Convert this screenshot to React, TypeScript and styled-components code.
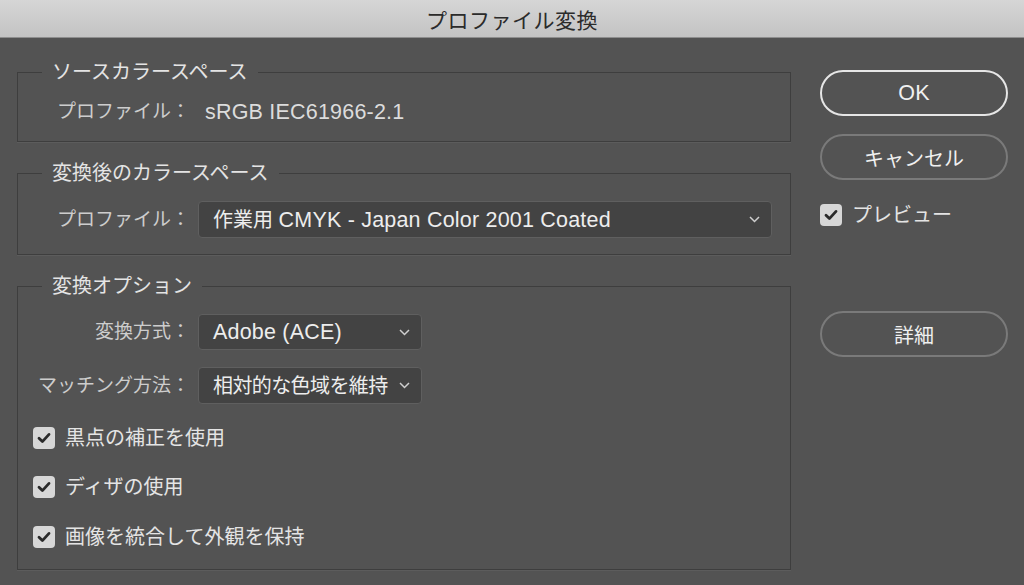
import React from 'react'
import styled, { createGlobalStyle } from 'styled-components'

const GlobalStyle = createGlobalStyle`
  html, body {
    margin: 0;
    padding: 0;
    background: #535353;
  }
  body {
    font-family: "Liberation Sans", "Noto Sans CJK JP", sans-serif;
    -webkit-font-smoothing: antialiased;
  }
`

const Window = styled.div`
  width: 1024px;
  height: 585px;
  background: #535353;
  overflow: hidden;
`

const TitleBar = styled.div`
  height: 37px;
  border-bottom: 1px solid #8e8e8e;
  background: linear-gradient(#d6d6d6, #c3c3c3);
  display: flex;
  align-items: center;
  justify-content: center;
  color: #2b2b2b;
  font-size: 21px;
  letter-spacing: 0.5px;
`

// latin runs render a bit larger than the kana in the original
const Lat = styled.span`
  font-size: 21.5px;
  letter-spacing: 0.2px;
`

const Tight = styled.span`
  letter-spacing: -0.6px;
`

const Main = styled.div`
  display: flex;
  align-items: flex-start;
  padding: 22px 16px 0 17px;
`

const LeftColumn = styled.div`
  width: 774px;
  display: flex;
  flex-direction: column;
  gap: 19px;
`

const Group = styled.fieldset<{ $bottom?: number }>`
  margin: 0;
  padding: 16px 0 ${(p) => p.$bottom ?? 16}px;
  border: 1px solid #3e3e3e;
  box-shadow: 0 1px 0 #5c5c5c;
  min-width: 0;
`

const Legend = styled.legend`
  margin-left: 24px;
  padding: 0 10px;
  font-size: 20px;
  line-height: 24px;
  color: #e4e4e4;
`

const FieldRow = styled.div<{ $gap?: number }>`
  display: grid;
  grid-template-columns: 172px 1fr;
  column-gap: 8px;
  align-items: center;
  line-height: 24px;
  margin-top: ${(p) => p.$gap ?? 0}px;
`

const Label = styled.span`
  text-align: right;
  font-size: 19px;
  color: #cdcdcd;
  white-space: nowrap;
`

const Value = styled.span`
  padding-left: 7px;
  font-size: 20px;
  color: #dcdcdc;
`

const Select = styled.div<{ $width: number; $height?: number }>`
  width: ${(p) => p.$width}px;
  height: ${(p) => p.$height ?? 36}px;
  box-sizing: border-box;
  display: flex;
  align-items: center;
  justify-content: space-between;
  gap: 6px;
  padding: 0 11px 0 14px;
  background: #434343;
  border: 1px solid #5f5f5f;
  border-radius: 4px;
  font-size: 20px;
  color: #ededed;
  white-space: nowrap;
`

const Chevron = () => (
  <svg width="11" height="7" viewBox="0 0 11 7" style={{ flexShrink: 0 }}>
    <path d="M1 1l4.5 4.5L10 1" fill="none" stroke="#cfcfcf" strokeWidth="1.5" />
  </svg>
)

const CheckRow = styled.label<{ $gap?: number; $indent?: number }>`
  display: flex;
  align-items: center;
  gap: 10px;
  margin-left: ${(p) => p.$indent ?? 15}px;
  margin-top: ${(p) => p.$gap ?? 0}px;
  font-size: 20px;
  line-height: 24px;
  color: #e4e4e4;
`

const Box = styled.span`
  width: 22px;
  height: 22px;
  border-radius: 4px;
  background: #d7d7d7;
  display: flex;
  align-items: center;
  justify-content: center;
  flex-shrink: 0;
`

const Check = () => (
  <Box>
    <svg width="14" height="12" viewBox="0 0 14 12">
      <path d="M2 6.2l3.4 3.4L12 2.4" fill="none" stroke="#2a2a2a" strokeWidth="2.8" strokeLinecap="round" strokeLinejoin="round" />
    </svg>
  </Box>
)

const RightColumn = styled.div`
  margin-left: 29px;
  margin-top: 10px;
  width: 188px;
  display: flex;
  flex-direction: column;
`

const PillButton = styled.button<{ $primary?: boolean; $gap?: number }>`
  height: 46px;
  width: 188px;
  margin-top: ${(p) => p.$gap ?? 0}px;
  border-radius: 23px;
  background: transparent;
  border: 2px solid ${(p) => (p.$primary ? '#e6e6e6' : '#7a7a7a')};
  color: #f0f0f0;
  font-family: inherit;
  font-size: 20px;
  padding: 0;
`

export default function App() {
  return (
    <Window>
      <GlobalStyle />
      <TitleBar>プロファイル変換</TitleBar>
      <Main>
        <LeftColumn>
          <Group $bottom={17}>
            <Legend>ソースカラースペース</Legend>
            <FieldRow>
              <Label>プロファイル：</Label>
              <Value><Lat>sRGB IEC61966-2.1</Lat></Value>
            </FieldRow>
          </Group>

          <Group>
            <Legend>変換後のカラースペース</Legend>
            <FieldRow>
              <Label>プロファイル：</Label>
              <Select $width={574} $height={37}>
                <span>作業用 <Lat>CMYK - Japan Color 2001 Coated</Lat></span>
                <Chevron />
              </Select>
            </FieldRow>
          </Group>

          <Group $bottom={20}>
            <Legend>変換オプション</Legend>
            <FieldRow>
              <Label>変換方式：</Label>
              <Select $width={224}>
                <Lat>Adobe (ACE)</Lat>
                <Chevron />
              </Select>
            </FieldRow>
            <FieldRow $gap={17}>
              <Label>マッチング方法：</Label>
              <Select $width={224} $height={37}>
                <Tight>相対的な色域を維持</Tight>
                <Chevron />
              </Select>
            </FieldRow>
            <CheckRow $gap={22}>
              <Check />
              黒点の補正を使用
            </CheckRow>
            <CheckRow $gap={25}>
              <Check />
              ディザの使用
            </CheckRow>
            <CheckRow $gap={26}>
              <Check />
              画像を統合して外観を保持
            </CheckRow>
          </Group>
        </LeftColumn>

        <RightColumn>
          <PillButton $primary><Lat>OK</Lat></PillButton>
          <PillButton $gap={18}>キャンセル</PillButton>
          <CheckRow $gap={23} $indent={0}>
            <Check />
            プレビュー
          </CheckRow>
          <PillButton $gap={84}>詳細</PillButton>
        </RightColumn>
      </Main>
    </Window>
  )
}
